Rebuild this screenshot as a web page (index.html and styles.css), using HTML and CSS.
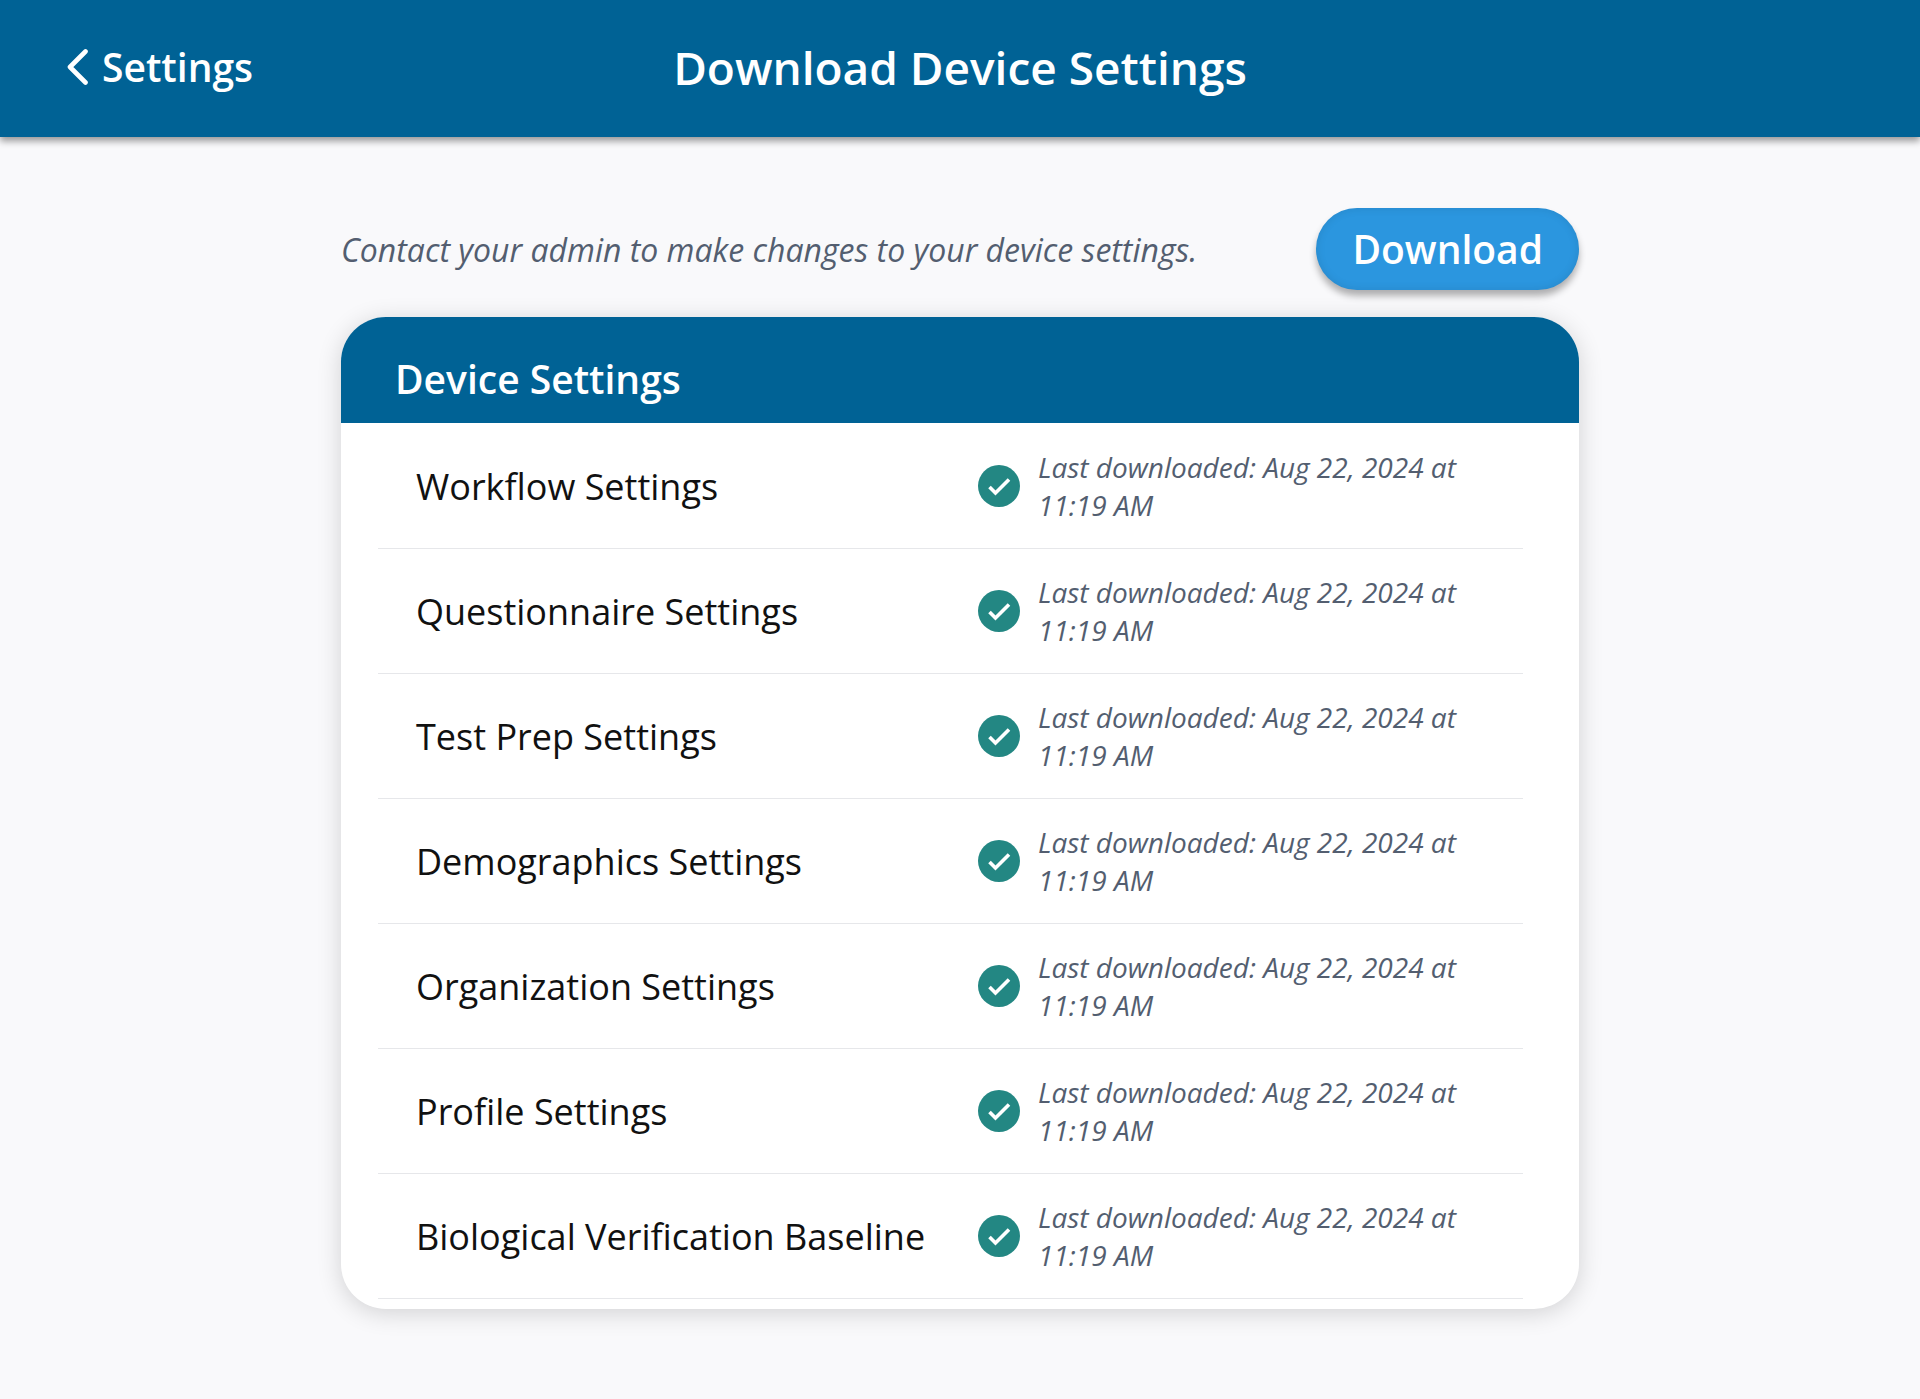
FILE: index.html
```html
<!DOCTYPE html>
<html lang="en">
<head>
    <meta charset="UTF-8">
    <meta name="viewport" content="width=device-width, initial-scale=1.0">
    <title>Download Device Settings</title>
    <link rel="stylesheet" href="styles.css">
</head>
<body>
    <svg class="sprite" aria-hidden="true">
        <symbol id="check" viewBox="0 0 42 42">
            <circle cx="21" cy="21" r="21" fill="#238783"/>
            <path d="M11.500 22l6 6L31 14.500" fill="none" stroke="#fff" stroke-width="3.600"/>
        </symbol>
    </svg>

    <!-- Top bar -->
    <header class="navbar">
        <a href="#" class="back">
            <svg class="chevron" viewBox="0 0 22 36" aria-hidden="true"><path d="M18.500 2.500L3 18l15.500 15.500" fill="none" stroke="#fff" stroke-width="4.600" stroke-linecap="round" stroke-linejoin="round"/></svg>
            Settings
        </a>
        <h1>Download Device Settings</h1>
    </header>

    <main class="content">
        <div class="toolbar">
            <p>Contact your admin to make changes to your device settings.</p>
            <button type="button" class="download">Download</button>
        </div>

        <!-- Settings list -->
        <section class="card">
            <h2>Device Settings</h2>
            <ul class="settings">
                <li><span class="name">Workflow Settings</span><svg class="check"><use href="#check"/></svg><span class="date">Last downloaded: Aug 22, 2024 at 11:19 AM</span></li>
                <li><span class="name">Questionnaire Settings</span><svg class="check"><use href="#check"/></svg><span class="date">Last downloaded: Aug 22, 2024 at 11:19 AM</span></li>
                <li><span class="name">Test Prep Settings</span><svg class="check"><use href="#check"/></svg><span class="date">Last downloaded: Aug 22, 2024 at 11:19 AM</span></li>
                <li><span class="name">Demographics Settings</span><svg class="check"><use href="#check"/></svg><span class="date">Last downloaded: Aug 22, 2024 at 11:19 AM</span></li>
                <li><span class="name">Organization Settings</span><svg class="check"><use href="#check"/></svg><span class="date">Last downloaded: Aug 22, 2024 at 11:19 AM</span></li>
                <li><span class="name">Profile Settings</span><svg class="check"><use href="#check"/></svg><span class="date">Last downloaded: Aug 22, 2024 at 11:19 AM</span></li>
                <li><span class="name">Biological Verification Baseline</span><svg class="check"><use href="#check"/></svg><span class="date">Last downloaded: Aug 22, 2024 at 11:19 AM</span></li>
            </ul>
        </section>
    </main>
</body>
</html>
```
FILE: styles.css
```css
* {
    box-sizing: border-box;
}
body {
    font-family: "Open Sans", sans-serif;
    margin: 0;
    background-color: #f9f9fb;
}
.sprite {
    display: none;
}
.navbar {
    display: grid;
    grid-template-columns: 1fr auto 1fr;
    align-items: center;
    padding: 35px 67px 38px;
    background-color: #006295;
    color: white;
    box-shadow: 0 4px 7px rgba(0, 0, 0, 0.4);
}
.navbar h1 {
    margin: 0;
    font-size: 46px;
    line-height: 64px;
    font-weight: 600;
}
.back {
    display: flex;
    align-items: center;
    gap: 13px;
    color: white;
    font-size: 39px;
    line-height: 56px;
    font-weight: 600;
    text-decoration: none;
}
.chevron {
    width: 22px;
    height: 36px;
}
.content {
    max-width: 1238px;
    margin: 0 auto;
    padding: 71px 0 88px;
}
.toolbar {
    display: flex;
    justify-content: space-between;
    align-items: center;
    margin-bottom: 27px;
}
.toolbar p {
    margin: 0;
    color: #535e70;
    font-size: 32px;
    font-style: italic;
}
.download {
    padding: 13px 36px;
    border: none;
    border-radius: 41px;
    background-color: #2b96df;
    color: white;
    font-family: inherit;
    font-size: 39px;
    line-height: 56px;
    font-weight: 600;
    cursor: pointer;
    box-shadow: 0 6px 7px rgba(0, 0, 0, 0.3), inset 0 0 10px rgba(0, 0, 0, 0.1);
}
.card {
    overflow: hidden;
    padding-bottom: 10px;
    border-radius: 45px;
    background-color: white;
    box-shadow: 0 4px 24px rgba(0, 0, 0, 0.16);
}
.card h2 {
    margin: 0;
    padding: 36px 54px 18px;
    background-color: #006295;
    color: white;
    font-size: 39px;
    line-height: 52px;
    font-weight: 600;
}
.settings {
    list-style: none;
    margin: 0;
    padding: 1px 56px 0 37px;
}
.settings li {
    display: grid;
    grid-template-columns: 562px 42px 1fr;
    align-items: center;
    padding: 24px 38px;
    border-bottom: 1px solid #e6e7ea;
}
.name {
    color: #111;
    font-size: 36px;
}
.check {
    width: 42px;
    height: 42px;
}
.date {
    padding-left: 18px;
    color: #535e70;
    font-size: 28px;
    line-height: 38px;
    font-style: italic;
}
```
